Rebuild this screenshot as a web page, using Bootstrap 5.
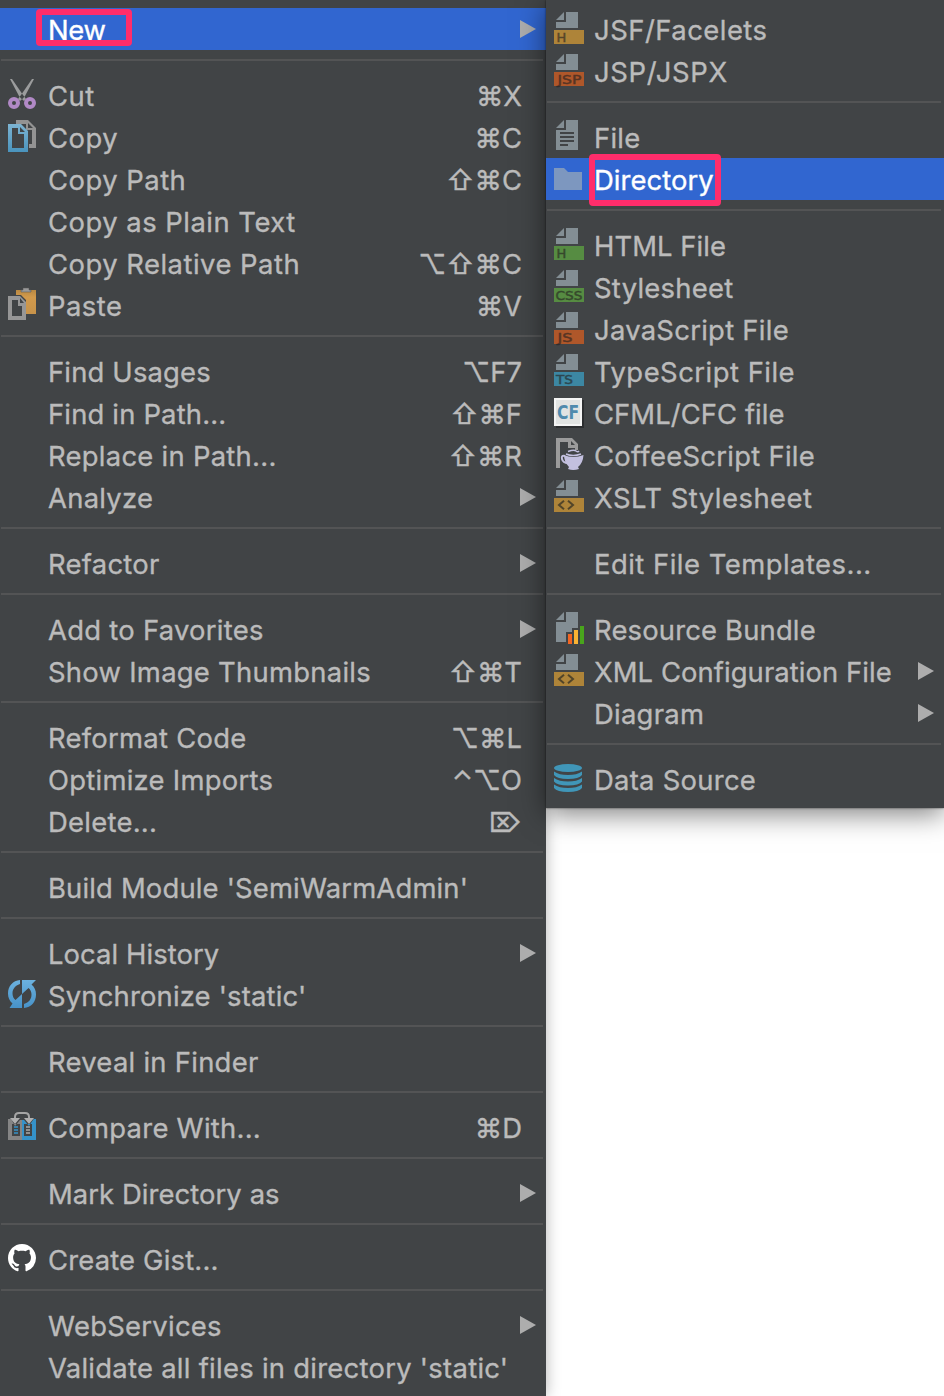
<!DOCTYPE html>
<html lang="en">
<head>
<meta charset="utf-8">
<meta name="viewport" content="width=device-width, initial-scale=1">
<title>Context menu</title>
<link href="https://cdn.jsdelivr.net/npm/bootstrap@5.3.0/dist/css/bootstrap.min.css" rel="stylesheet">
<style>
body{background:#fff;font-family:Inter,"DejaVu Sans",sans-serif;font-size:27.4px;color:#bbb;overflow:hidden}
.stage{height:1396px;overflow:hidden}
.pane{background:#414446;padding-top:8px}
.pane-main{width:546px;height:1396px;box-shadow:0 0 14px rgba(0,0,0,.3)}
.pane-sub{width:398px;height:808px;box-shadow:0 6px 26px rgba(0,0,0,.5),0 0 2px rgba(0,0,0,.6);z-index:2}
.entry{height:42px;line-height:42px;padding-left:8px;white-space:nowrap}
.entry.active{background:#3166d0;color:#fff}
.ico{width:32px;height:42px;margin-right:8px;flex:none}
.lbl,.keys{padding-top:1px;height:42px;-webkit-text-stroke:.35px currentColor}
.lbl{letter-spacing:.28px}
.trk-0{letter-spacing:-.3px}
.trk-1{letter-spacing:.08px}
.trk-2{letter-spacing:.18px}
.trk-3{letter-spacing:.5px}
.trk-4{letter-spacing:.7px}
.keys{margin-right:24px}
.tri{width:16px;height:18px;margin-right:10px;fill:#adadad}
.rule{height:2px;background:#535455;margin:9px 3px 13px 1px}
.ring{border:6px solid #ff2d6b;border-radius:4px}
.ring-new{left:36px;top:1px;width:96px;height:37px}
.ring-dir{left:43px;top:-4px;width:132px;height:52px}
.tag{font:13px "DejaVu Sans",sans-serif;fill:#231f20;stroke:#231f20;stroke-width:.5px;opacity:.62}
</style>
</head>
<body>
<svg width="0" height="0" class="position-absolute">
<defs>
<linearGradient id="gb" x1="0" y1="0" x2="0" y2="1"><stop offset="0" stop-color="#7db4d2"/><stop offset="1" stop-color="#4a94bd"/></linearGradient>
<linearGradient id="go" x1="0" y1="0" x2="0" y2="1"><stop offset="0" stop-color="#b98842"/><stop offset=".3" stop-color="#d29a4c"/><stop offset="1" stop-color="#c7934a"/></linearGradient>
<linearGradient id="gs" x1="0" y1="0" x2="0" y2="1"><stop offset="0" stop-color="#6cb2df"/><stop offset="1" stop-color="#4792c8"/></linearGradient>
<symbol id="arrow" viewBox="0 0 16 18"><path d="M0 0L16 9L0 18z"/></symbol>
<symbol id="page" viewBox="0 0 32 42"><path fill="#838e94" d="M2 12L10 4V12zM12 4H24V20H2V14H12z"/></symbol>
<symbol id="xmltag" viewBox="0 0 32 42"><use href="#page"/><path fill="#ae8439" d="M0 22H30V36H0z"/><path d="M10 24.800L5 29L10 33.200M14 24.800L19 29L14 33.200" fill="none" stroke="#524529" stroke-width="2"/></symbol>
</defs>
</svg>
<main class="stage d-flex align-items-start">
<div class="pane pane-main flex-shrink-0">
  <div class="entry active d-flex position-relative"><span class="ico"></span><span class="lbl trk-0">New</span><svg class="tri ms-auto align-self-center"><use href="#arrow"/></svg><span class="ring ring-new position-absolute"></span></div>
  <div class="rule"></div>
  <div class="entry d-flex"><svg class="ico" viewBox="0 0 32 42"><path fill="#9b9c9d" d="M2 5L4 5L15 21L18 25L16 27L11 22z M26 5L24 5L13 21L10 25L12 27L17 22z"/><circle cx="14" cy="23" r="1.500" fill="#414446"/><g fill="none" stroke="#b189c6" stroke-width="4"><circle cx="6" cy="29" r="4"/><circle cx="22" cy="29" r="4"/></g></svg><span class="lbl trk-3">Cut</span><span class="keys ms-auto">⌘X</span></div>
  <div class="entry d-flex"><svg class="ico" viewBox="0 0 32 42"><path fill="#939393" fill-rule="evenodd" d="M8 4H20L28 12V32H21V28H24V14H18V8H8zM20 7V12H25z"/><path fill="url(#gb)" fill-rule="evenodd" d="M0 8H13L20 15V36H0zM4 12V32H16V18H10V12zM12 11V16H17z"/></svg><span class="lbl trk-3">Copy</span><span class="keys ms-auto">⌘C</span></div>
  <div class="entry d-flex"><span class="ico"></span><span class="lbl trk-3">Copy Path</span><span class="keys ms-auto">⇧⌘C</span></div>
  <div class="entry d-flex"><span class="ico"></span><span class="lbl trk-3">Copy as Plain Text</span></div>
  <div class="entry d-flex"><span class="ico"></span><span class="lbl trk-3">Copy Relative Path</span><span class="keys ms-auto">⌥⇧⌘C</span></div>
  <div class="entry d-flex"><svg class="ico" viewBox="0 0 32 42"><path fill="url(#go)" d="M8 6H28V30H18V16L13 11H8z"/><path fill="#999" stroke="#515151" stroke-width=".5" d="M15 4H21V6H23V8H13V6H15z"/><path fill="#414446" d="M4 16H14V32H4z"/><path fill="#969696" fill-rule="evenodd" d="M0 12H12L18 18V36H0zM4 16V32H14V22H10V16zM12 14V19H16z"/></svg><span class="lbl trk-3">Paste</span><span class="keys ms-auto">⌘V</span></div>
  <div class="rule"></div>
  <div class="entry d-flex"><span class="ico"></span><span class="lbl trk-2">Find Usages</span><span class="keys ms-auto">⌥F7</span></div>
  <div class="entry d-flex"><span class="ico"></span><span class="lbl trk-2">Find in Path...</span><span class="keys ms-auto">⇧⌘F</span></div>
  <div class="entry d-flex"><span class="ico"></span><span class="lbl">Replace in Path...</span><span class="keys ms-auto">⇧⌘R</span></div>
  <div class="entry d-flex"><span class="ico"></span><span class="lbl">Analyze</span><svg class="tri ms-auto align-self-center"><use href="#arrow"/></svg></div>
  <div class="rule"></div>
  <div class="entry d-flex"><span class="ico"></span><span class="lbl">Refactor</span><svg class="tri ms-auto align-self-center"><use href="#arrow"/></svg></div>
  <div class="rule"></div>
  <div class="entry d-flex"><span class="ico"></span><span class="lbl">Add to Favorites</span><svg class="tri ms-auto align-self-center"><use href="#arrow"/></svg></div>
  <div class="entry d-flex"><span class="ico"></span><span class="lbl">Show Image Thumbnails</span><span class="keys ms-auto">⇧⌘T</span></div>
  <div class="rule"></div>
  <div class="entry d-flex"><span class="ico"></span><span class="lbl">Reformat Code</span><span class="keys ms-auto">⌥⌘L</span></div>
  <div class="entry d-flex"><span class="ico"></span><span class="lbl">Optimize Imports</span><span class="keys ms-auto">⌃⌥O</span></div>
  <div class="entry d-flex"><span class="ico"></span><span class="lbl">Delete...</span><span class="keys ms-auto">⌦</span></div>
  <div class="rule"></div>
  <div class="entry d-flex"><span class="ico"></span><span class="lbl trk-2">Build Module 'SemiWarmAdmin'</span></div>
  <div class="rule"></div>
  <div class="entry d-flex"><span class="ico"></span><span class="lbl trk-1">Local History</span><svg class="tri ms-auto align-self-center"><use href="#arrow"/></svg></div>
  <div class="entry d-flex"><svg class="ico" viewBox="0 0 32 42"><g fill="url(#gs)"><path d="M12 6V10C7 11.500 4.500 15 4.500 19.500C4.500 22 5.500 24.500 7.500 26L14 20V34H1.500L4.500 29.500C1.500 27 0 23.500 0 19.500C0 12 5 6.500 12 6z"/><path d="M16 34V30C21 28.500 23.500 25 23.500 20.500C23.500 18 22.500 15.500 20.500 14L14 20V6H28L23.500 10.500C26.500 13 28 16.500 28 20.500C28 28 23 33.500 16 34z"/></g></svg><span class="lbl trk-2">Synchronize 'static'</span></div>
  <div class="rule"></div>
  <div class="entry d-flex"><span class="ico"></span><span class="lbl">Reveal in Finder</span></div>
  <div class="rule"></div>
  <div class="entry d-flex"><svg class="ico" viewBox="0 0 32 42"><path fill="#858585" d="M0 13H14V34H0z"/><path fill="#3592c9" d="M14 13H28V34H14z"/><path fill="#414446" d="M4 18H12V30H4zM16 18H24V30H16zM0 11H2L7 20L12 14H16L21 20L27 11V9H0z"/><path d="M6 21H10M6 24H10M6 27H10" stroke="#3592c9" stroke-width="1.500"/><path d="M18 21H22M18 24H22M18 27H22" stroke="#aaa" stroke-width="1.500"/><path d="M7 14V11Q7 7 11 7H17Q21 7 21 11V14" fill="none" stroke="#a5a5a5" stroke-width="2"/><path d="M2 12H12L7 18zM16 12H26L21 18z" fill="#b0b0b0"/></svg><span class="lbl">Compare With...</span><span class="keys ms-auto">⌘D</span></div>
  <div class="rule"></div>
  <div class="entry d-flex"><span class="ico"></span><span class="lbl trk-1">Mark Directory as</span><svg class="tri ms-auto align-self-center"><use href="#arrow"/></svg></div>
  <div class="rule"></div>
  <div class="entry d-flex"><svg class="ico" viewBox="0 0 32 42"><path transform="translate(0 6) scale(1.750)" fill="#fff" d="M8 0C3.580 0 0 3.580 0 8c0 3.540 2.290 6.530 5.470 7.590.4.070.55-.17.55-.38 0-.19-.01-.82-.01-1.490-2.010.37-2.530-.49-2.690-.94-.09-.23-.48-.94-.82-1.130-.28-.15-.68-.52-.01-.53.63-.01 1.080.58 1.230.82.72 1.210 1.870.87 2.330.66.070-.52.28-.87.51-1.070-1.780-.2-3.640-.89-3.640-3.950 0-.87.31-1.590.82-2.150-.08-.2-.36-1.020.08-2.120 0 0 .67-.21 2.200.82.64-.18 1.320-.27 2-.27s1.360.09 2 .27c1.530-1.040 2.200-.82 2.200-.82.44 1.100.16 1.920.08 2.120.51.56.82 1.270.82 2.150 0 3.070-1.870 3.750-3.650 3.950.29.25.54.73.54 1.480 0 1.070-.01 1.930-.01 2.200 0 .21.15.46.55.38A8.010 8.010 0 0 0 16 8c0-4.420-3.580-8-8-8z"/></svg><span class="lbl trk-2">Create Gist...</span></div>
  <div class="rule"></div>
  <div class="entry d-flex"><span class="ico"></span><span class="lbl">WebServices</span><svg class="tri ms-auto align-self-center"><use href="#arrow"/></svg></div>
  <div class="entry d-flex"><span class="ico"></span><span class="lbl">Validate all files in directory 'static'</span></div>
</div>
<div class="pane pane-sub flex-shrink-0 position-relative">
  <div class="entry d-flex"><svg class="ico" viewBox="0 0 32 42"><use href="#page"/><path fill="#ae8439" d="M0 22H30V36H0z"/><text class="tag" x="2.500" y="34">H</text></svg><span class="lbl trk-3">JSF/Facelets</span></div>
  <div class="entry d-flex"><svg class="ico" viewBox="0 0 32 42"><use href="#page"/><path fill="#af572a" d="M0 22H30V36H0z"/><text class="tag" x="3.500" y="34" textLength="24" lengthAdjust="spacingAndGlyphs">JSP</text></svg><span class="lbl trk-4">JSP/JSPX</span></div>
  <div class="rule"></div>
  <div class="entry d-flex"><svg class="ico" viewBox="0 0 32 42"><path fill="#838e94" d="M2 12L10 4V12zM12 4H24V34H2V14H12z"/><path stroke="#414446" stroke-width="2" d="M6 17H20M6 21H20M6 25H20M6 29H14"/></svg><span class="lbl">File</span></div>
  <div class="entry active d-flex position-relative"><svg class="ico" viewBox="0 0 32 42"><path fill="#7d97bf" d="M0 10H10L14 14H28V32H0z"/></svg><span class="lbl trk-1">Directory</span><span class="ring ring-dir position-absolute"></span></div>
  <div class="rule"></div>
  <div class="entry d-flex"><svg class="ico" viewBox="0 0 32 42"><use href="#page"/><path fill="#568c42" d="M0 22H30V36H0z"/><text class="tag" x="2.500" y="34">H</text></svg><span class="lbl trk-1">HTML File</span></div>
  <div class="entry d-flex"><svg class="ico" viewBox="0 0 32 42"><use href="#page"/><path fill="#568c42" d="M0 22H30V36H0z"/><text class="tag" x="1.500" y="34" textLength="27" lengthAdjust="spacingAndGlyphs">CSS</text></svg><span class="lbl">Stylesheet</span></div>
  <div class="entry d-flex"><svg class="ico" viewBox="0 0 32 42"><use href="#page"/><path fill="#af572a" d="M0 22H30V36H0z"/><text class="tag" x="3.500" y="34" textLength="15" lengthAdjust="spacingAndGlyphs">JS</text></svg><span class="lbl">JavaScript File</span></div>
  <div class="entry d-flex"><svg class="ico" viewBox="0 0 32 42"><use href="#page"/><path fill="#3c87a3" d="M0 22H30V36H0z"/><text class="tag" x="2" y="34" textLength="17" lengthAdjust="spacingAndGlyphs">TS</text></svg><span class="lbl trk-3">TypeScript File</span></div>
  <div class="entry d-flex"><svg class="ico" viewBox="0 0 32 42"><path fill="#2c2e30" d="M2 8H30V36H2z"/><path fill="#e1e3e2" d="M0 6H28V34H0z"/><path fill="none" stroke="#f4f4f4" stroke-width="2" d="M1 7H27V33H1z"/><text x="3" y="27" textLength="22" lengthAdjust="spacingAndGlyphs" style="font:bold 20px 'DejaVu Sans',sans-serif" fill="#4f8aad">CF</text></svg><span class="lbl trk-1">CFML/CFC file</span></div>
  <div class="entry d-flex"><svg class="ico" viewBox="0 0 32 42"><path fill="#9b9b9b" fill-rule="evenodd" d="M2 4H18L24 10V16H21V14H14V8H6V34H2zM17 7V11H21z"/><path d="M11 22Q7 21 8 25Q9 29 14 29" fill="none" stroke="#c3c0df" stroke-width="2"/><path fill="#c3c0df" d="M10 21Q19 25 29.500 21Q29 29 24 33L25 35Q19 37 14 35L15 33Q10 28 10 21z"/><path d="M12 20Q19 23 27 20M14 17.500Q20 15.500 22 17T25 17" fill="none" stroke="#c3c0df" stroke-width="1.500"/></svg><span class="lbl">CoffeeScript File</span></div>
  <div class="entry d-flex"><svg class="ico"><use href="#xmltag"/></svg><span class="lbl trk-3">XSLT Stylesheet</span></div>
  <div class="rule"></div>
  <div class="entry d-flex"><span class="ico"></span><span class="lbl trk-3">Edit File Templates...</span></div>
  <div class="rule"></div>
  <div class="entry d-flex"><svg class="ico" viewBox="0 0 32 42"><path fill="#838e94" d="M2 12L10 4V12zM12 4H24V20H18V24H12V34H2V14H12z"/><path fill="#f26522" d="M14 26H18V36H14z"/><path fill="#f9b233" d="M20 22H24V36H20z"/><path fill="#49a51c" d="M26 18H30V36H26z"/></svg><span class="lbl trk-2">Resource Bundle</span></div>
  <div class="entry d-flex"><svg class="ico"><use href="#xmltag"/></svg><span class="lbl trk-1">XML Configuration File</span><svg class="tri ms-auto align-self-center"><use href="#arrow"/></svg></div>
  <div class="entry d-flex"><span class="ico"></span><span class="lbl">Diagram</span><svg class="tri ms-auto align-self-center"><use href="#arrow"/></svg></div>
  <div class="rule"></div>
  <div class="entry d-flex"><svg class="ico" viewBox="0 0 32 42"><g fill="#4096b8"><ellipse cx="14" cy="10" rx="14" ry="4"/><path id="disk" d="M0 13.500Q5 17 14 17T28 13.500V17Q25 21 14 21T0 17z"/><use href="#disk" y="6.500"/><use href="#disk" y="13"/></g></svg><span class="lbl">Data Source</span></div>
</div>
</main>
<script src="https://cdn.jsdelivr.net/npm/bootstrap@5.3.0/dist/js/bootstrap.bundle.min.js"></script>
</body>
</html>
